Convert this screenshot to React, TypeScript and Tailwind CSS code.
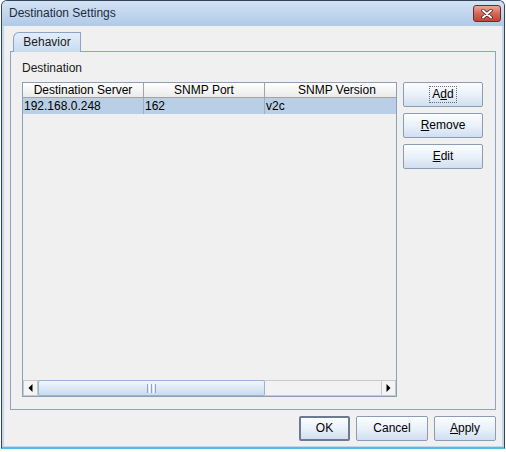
import React from "react";

function Btn({
  children,
  className = "",
  def = false,
}: {
  children: React.ReactNode;
  className?: string;
  def?: boolean;
}) {
  return (
    <div
      className={`h-[25px] flex items-center justify-center rounded-[2px] border bg-linear-to-b from-[#fcfdff] via-[#eaf1f9] to-[#d0dff0] text-[12px] text-black leading-[15px] ${
        def ? "border-2 border-[#6a7a90]" : "border-[#8b9db6]"
      } ${className}`}
    >
      {children}
    </div>
  );
}

export default function App() {
  return (
    <div className="w-[506px] h-[452px] bg-white font-['Liberation_Sans',Arial,sans-serif] text-black">
      <div className="ml-[1px] w-[504px] h-[449px] border border-[#34455a] border-b-[#4fbde4] border-b-2 rounded-t-[6px] bg-[#c2d6ee] flex flex-col overflow-hidden">
        {/* Title bar */}
        <div className="h-[25px] flex items-start bg-linear-to-b from-[#d3e3f5] to-[#b0c9e7] pl-[7px] pr-[3px]">
          <div className="mt-[5px] text-[12px] leading-[15px] text-[#1e2a3a]">
            Destination Settings
          </div>
          <div className="ml-auto mt-[4px] w-[28px] h-[17px] rounded-[3px] border border-[#6f2b22] bg-linear-to-b from-[#eaa89c] via-[#d4675a] to-[#bf4636] flex items-center justify-center">
            <svg width="12" height="10" viewBox="0 0 12 10">
              <path
                d="M2 1.5 L10 8.5 M10 1.5 L2 8.5"
                stroke="#4a1a14"
                strokeWidth="3.4"
                strokeLinecap="round"
              />
              <path
                d="M2 1.5 L10 8.5 M10 1.5 L2 8.5"
                stroke="#ffffff"
                strokeWidth="2"
                strokeLinecap="round"
              />
            </svg>
          </div>
        </div>

        {/* Content */}
        <div className="mx-[2px] h-[420px] bg-[#f0f0f0] flex flex-col pt-[6px]">
          {/* Tab strip */}
          <div className="pl-[9px] flex">
            <div className="relative z-10 -mb-px h-[20px] w-[68px] border border-b-0 border-[#8aa3c8] rounded-tl-[6px] rounded-tr-[1px] bg-linear-to-b from-[#e4eef9] to-[#c8dbf0] flex items-center justify-center text-[12px] leading-[15px] text-[#1a1a1a]">
              Behavior
            </div>
          </div>
          {/* Tab pane */}
          <div className="mx-[6px] h-[359px] border border-[#8ca3c6] flex flex-col pl-[11px] pr-[11px] pt-[9px]">
            <div className="h-[15px] text-[12px] leading-[15px] text-[#1a1a1a]">
              Destination
            </div>
            <div className="mt-[6px] flex gap-[6px]">
              {/* Table */}
              <div className="w-[375px] h-[315px] border border-[#8d9fb8] flex flex-col bg-[#f0f0f0]">
                <div className="h-[15px] flex border-b border-[#a3a3a3] bg-linear-to-b from-[#ffffff] to-[#ebebeb] text-[12px] leading-[14px]">
                  <div className="w-[121px] border-r border-[#a3a3a3] text-center">
                    Destination Server
                  </div>
                  <div className="w-[121px] border-r border-[#a3a3a3] text-center">
                    SNMP Port
                  </div>
                  <div className="flex-1 pl-[33px] whitespace-nowrap overflow-hidden">
                    SNMP Version
                  </div>
                </div>
                <div className="h-[16px] flex bg-[#b8cfe5] text-[12px] leading-[16px]">
                  <div className="w-[121px] border-r border-[#9aaec4] pl-[1px]">
                    192.168.0.248
                  </div>
                  <div className="w-[121px] border-r border-[#9aaec4] pl-[1px]">
                    162
                  </div>
                  <div className="flex-1 pl-[1px]">v2c</div>
                </div>
                <div className="flex-1" />
                {/* Horizontal scrollbar */}
                <div className="h-[16px] flex bg-[#eeeeee]">
                  <div className="w-[15px] h-full border border-[#c9c9c9] bg-[#f4f4f4] flex items-center justify-center">
                    <svg width="5" height="8" viewBox="0 0 5 8">
                      <path d="M4.5 0 L0.5 4 L4.5 8 Z" fill="#000" />
                    </svg>
                  </div>
                  <div className="flex-1 flex border-y border-[#c9c9c9] bg-[#f2f2f2]">
                    <div className="w-[227px] -my-px h-[16px] rounded-[2px] border border-[#9ab3d3] bg-linear-to-b from-[#f1f6fc] via-[#dce8f6] to-[#c9dbef] flex items-center justify-center">
                      <div className="flex gap-[1px] h-[9px]">
                        <div className="w-px bg-[#8ea6c4]" />
                        <div className="w-px bg-[#ffffff]" />
                        <div className="w-px bg-[#8ea6c4]" />
                        <div className="w-px bg-[#ffffff]" />
                        <div className="w-px bg-[#8ea6c4]" />
                      </div>
                    </div>
                  </div>
                  <div className="w-[15px] h-full border border-[#c9c9c9] bg-[#f4f4f4] flex items-center justify-center">
                    <svg width="5" height="8" viewBox="0 0 5 8">
                      <path d="M0.5 0 L4.5 4 L0.5 8 Z" fill="#000" />
                    </svg>
                  </div>
                </div>
              </div>
              {/* Right buttons */}
              <div className="w-[80px] flex flex-col gap-[6px]">
                <Btn>
                  <span className="border border-dotted border-[#6a6a6a] px-[2px] leading-[15px]">
                    A<span className="underline">d</span>d
                  </span>
                </Btn>
                <Btn>
                  <span>
                    <span className="underline">R</span>emove
                  </span>
                </Btn>
                <Btn>
                  <span>
                    <span className="underline">E</span>dit
                  </span>
                </Btn>
              </div>
            </div>
          </div>
          {/* Bottom buttons */}
          <div className="mt-[6px] mr-[6px] flex justify-end gap-[6px]">
            <Btn def className="w-[51px]">
              OK
            </Btn>
            <Btn className="w-[72px]">Cancel</Btn>
            <Btn className="w-[62px]">
              <span>
                <span className="underline">A</span>pply
              </span>
            </Btn>
          </div>
        </div>
      </div>
    </div>
  );
}
